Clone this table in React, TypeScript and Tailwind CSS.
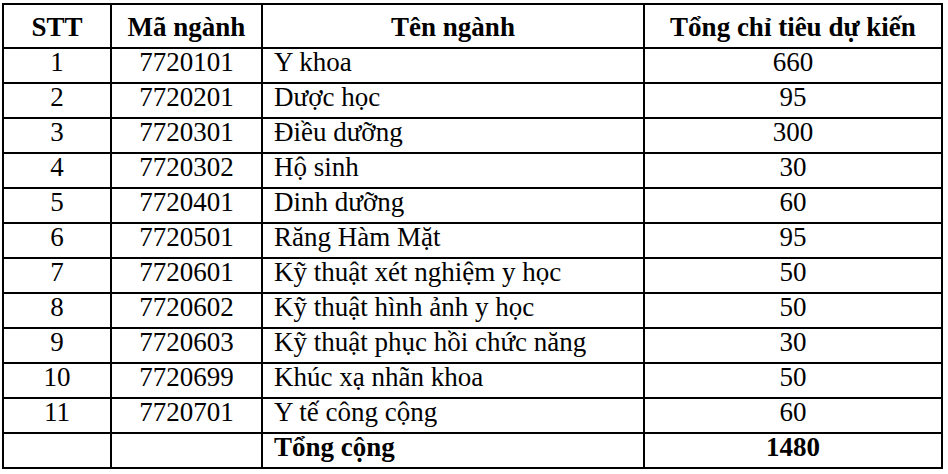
const rows: [string, string, string, string][] = [
  ['1', '7720101', 'Y khoa', '660'],
  ['2', '7720201', 'Dược học', '95'],
  ['3', '7720301', 'Điều dưỡng', '300'],
  ['4', '7720302', 'Hộ sinh', '30'],
  ['5', '7720401', 'Dinh dưỡng', '60'],
  ['6', '7720501', 'Răng Hàm Mặt', '95'],
  ['7', '7720601', 'Kỹ thuật xét nghiệm y học', '50'],
  ['8', '7720602', 'Kỹ thuật hình ảnh y học', '50'],
  ['9', '7720603', 'Kỹ thuật phục hồi chức năng', '30'],
  ['10', '7720699', 'Khúc xạ nhãn khoa', '50'],
  ['11', '7720701', 'Y tế công cộng', '60'],
];

export default function App() {
  return (
    <div className="w-[948px] h-[474px] overflow-hidden bg-white pl-[2px] pt-[3px] text-black [font-family:'Liberation_Serif','Times_New_Roman',serif] text-[27px] leading-[27px]">
      <div className="w-[941px] grid grid-cols-[106px_149px_380px_296px] grid-rows-[42px_repeat(12,33px)] gap-[2px] p-[2px] bg-black">
        {/* Header */}
        <div className="bg-white text-center font-bold pt-[9px]">STT</div>
        <div className="bg-white text-center font-bold pt-[9px]">Mã ngành</div>
        <div className="bg-white text-center font-bold pt-[9px]">Tên ngành</div>
        <div className="bg-white text-center font-bold pt-[9px]">Tổng chỉ tiêu dự kiến</div>

        {rows.map(([stt, code, name, total]) => (
          <div key={stt} className="contents">
            <div className="bg-white text-center">{stt}</div>
            <div className="bg-white text-center">{code}</div>
            <div className="bg-white pl-[11px] whitespace-nowrap">{name}</div>
            <div className="bg-white text-center">{total}</div>
          </div>
        ))}

        {/* Total */}
        <div className="bg-white"></div>
        <div className="bg-white"></div>
        <div className="bg-white pl-[11px] font-bold">Tổng cộng</div>
        <div className="bg-white text-center font-bold">1480</div>
      </div>
    </div>
  );
}
